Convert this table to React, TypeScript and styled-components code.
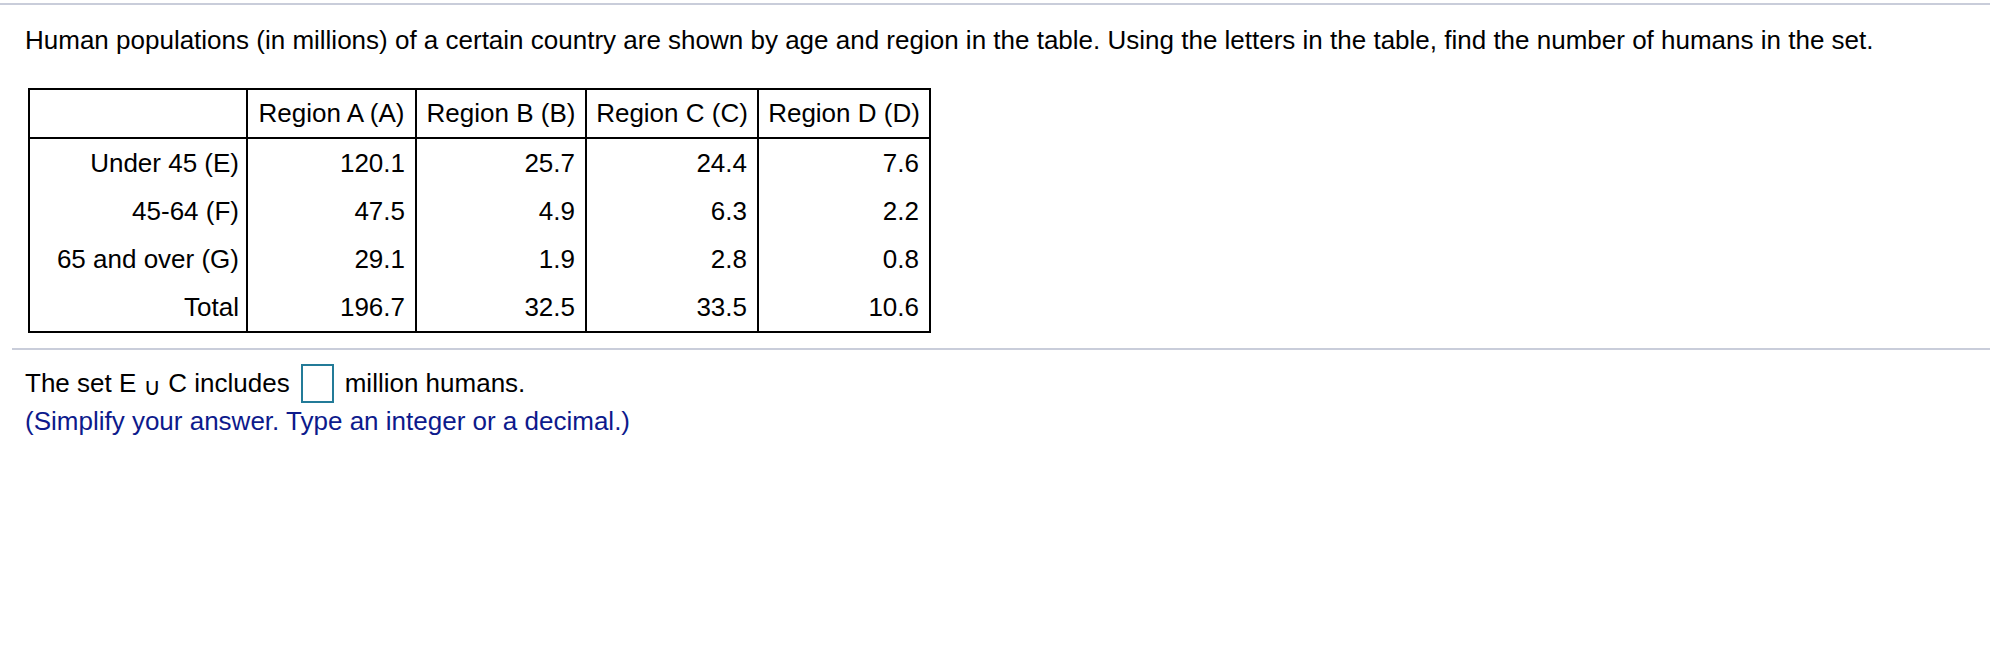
import styled, { createGlobalStyle } from "styled-components";

const GlobalStyle = createGlobalStyle`
  body {
    margin: 0;
    background: #ffffff;
    font-family: "Liberation Sans", Arial, sans-serif;
    color: #000000;
  }
`;

type Row = { label: string; values: string[] };

const regions = ["Region A (A)", "Region B (B)", "Region C (C)", "Region D (D)"];
const columnWidths = [218, 169, 170, 172, 172];

const rows: Row[] = [
  { label: "Under 45 (E)", values: ["120.1", "25.7", "24.4", "7.6"] },
  { label: "45-64 (F)", values: ["47.5", "4.9", "6.3", "2.2"] },
  { label: "65 and over (G)", values: ["29.1", "1.9", "2.8", "0.8"] },
  { label: "Total", values: ["196.7", "32.5", "33.5", "10.6"] },
];

const App = () => {
  return (
    <StyledPage>
      <GlobalStyle />
      <StyledTopRule />

      <StyledQuestion>
        <StyledPrompt>
          Human populations (in millions) of a certain country are shown by age
          and region in the table. Using the letters in the table, find the
          number of humans in the set.
        </StyledPrompt>

        <StyledTable>
          <colgroup>
            {columnWidths.map((w, i) => (
              <col key={i} style={{ width: w }} />
            ))}
          </colgroup>
          <thead>
            <tr>
              <StyledHeadCell />
              {regions.map((r) => (
                <StyledHeadCell key={r}>{r}</StyledHeadCell>
              ))}
            </tr>
          </thead>
          <tbody>
            {rows.map((row) => (
              <tr key={row.label}>
                <StyledCell $label>{row.label}</StyledCell>
                {row.values.map((v, i) => (
                  <StyledCell key={i}>{v}</StyledCell>
                ))}
              </tr>
            ))}
          </tbody>
        </StyledTable>
      </StyledQuestion>

      <StyledDivider />

      <StyledAnswerLine>
        The set E <StyledUnion>∪</StyledUnion> C includes
        <StyledAnswerBox />
        million humans.
      </StyledAnswerLine>
      <StyledHint>(Simplify your answer. Type an integer or a decimal.)</StyledHint>
    </StyledPage>
  );
};

export default App;

const StyledPage = styled.div`
  width: 1990px;
  min-height: 664px;
  font-size: 26px;
`;

const StyledTopRule = styled.div`
  margin-top: 3px;
  height: 2px;
  background: #c9cdda;
`;

const StyledQuestion = styled.section`
  padding: 20px 0 0 25px;
`;

const StyledPrompt = styled.p`
  margin: 0;
  line-height: 30px;
  white-space: nowrap;
`;

const StyledTable = styled.table`
  margin: 33px 0 0 3px;
  border-collapse: collapse;
  table-layout: fixed;
  border: 2px solid #000000;
  font-size: 26px;
`;

const StyledHeadCell = styled.th`
  height: 47px;
  padding: 0 9px;
  border: 2px solid #000000;
  font-weight: normal;
  text-align: center;
  white-space: nowrap;
`;

const StyledCell = styled.td<{ $label?: boolean }>`
  height: 48px;
  padding: 0 ${(p) => (p.$label ? "7px" : "10px")};
  border-left: 2px solid #000000;
  border-right: 2px solid #000000;
  text-align: right;
  white-space: nowrap;
`;

const StyledDivider = styled.div`
  margin: 15px 0 0 12px;
  height: 2px;
  background: #c9cdda;
`;

const StyledAnswerLine = styled.div`
  display: flex;
  align-items: center;
  margin-top: 14px;
  padding-left: 25px;
  height: 39px;
  white-space: pre;
`;

const StyledUnion = styled.span`
  font-family: "DejaVu Sans", sans-serif;
  font-size: 24px;
  position: relative;
  top: 3px;
`;

const StyledAnswerBox = styled.span`
  display: inline-block;
  box-sizing: border-box;
  width: 33px;
  height: 39px;
  margin: 0 11px;
  border: 2px solid #237b98;
`;

const StyledHint = styled.div`
  margin-top: 3px;
  padding-left: 25px;
  line-height: 30px;
  color: #0d1a8c;
`;
